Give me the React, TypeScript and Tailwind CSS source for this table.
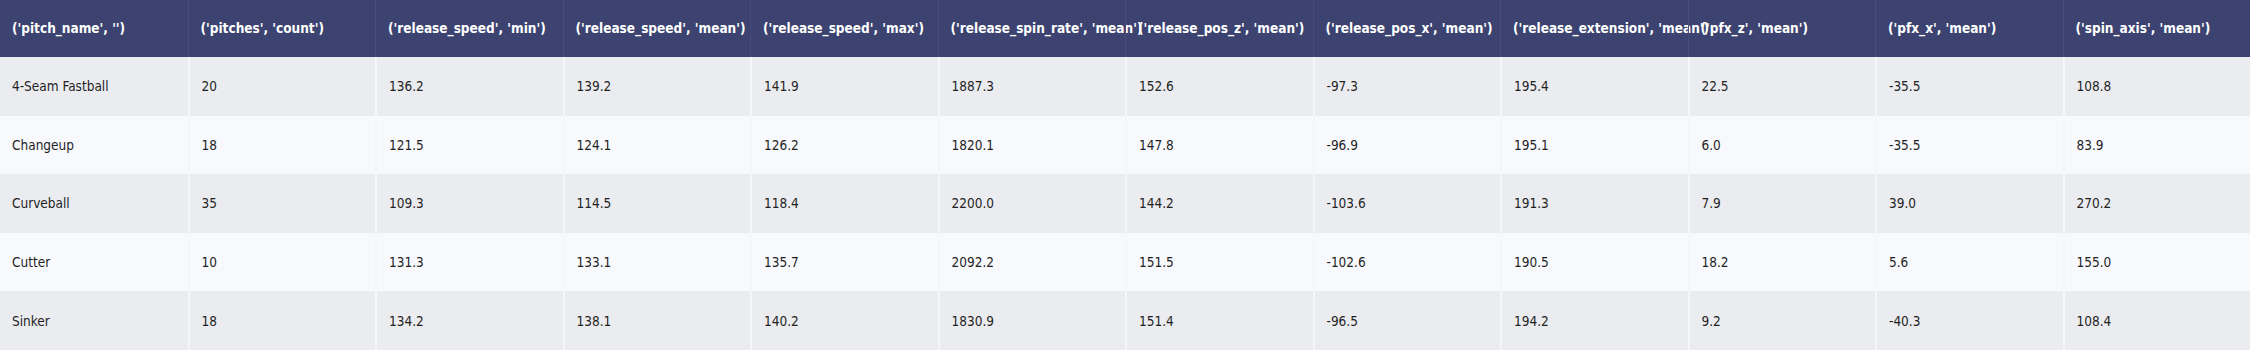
import React from "react";

const columns = [
  "('pitch_name', '')",
  "('pitches', 'count')",
  "('release_speed', 'min')",
  "('release_speed', 'mean')",
  "('release_speed', 'max')",
  "('release_spin_rate', 'mean')",
  "('release_pos_z', 'mean')",
  "('release_pos_x', 'mean')",
  "('release_extension', 'mean')",
  "('pfx_z', 'mean')",
  "('pfx_x', 'mean')",
  "('spin_axis', 'mean')",
];

const rows: string[][] = [
  ["4-Seam Fastball", "20", "136.2", "139.2", "141.9", "1887.3", "152.6", "-97.3", "195.4", "22.5", "-35.5", "108.8"],
  ["Changeup", "18", "121.5", "124.1", "126.2", "1820.1", "147.8", "-96.9", "195.1", "6.0", "-35.5", "83.9"],
  ["Curveball", "35", "109.3", "114.5", "118.4", "2200.0", "144.2", "-103.6", "191.3", "7.9", "39.0", "270.2"],
  ["Cutter", "10", "131.3", "133.1", "135.7", "2092.2", "151.5", "-102.6", "190.5", "18.2", "5.6", "155.0"],
  ["Sinker", "18", "134.2", "138.1", "140.2", "1830.9", "151.4", "-96.5", "194.2", "9.2", "-40.3", "108.4"],
];

const font = "font-['DejaVu_Sans_Condensed','DejaVu_Sans',sans-serif] font-stretch-condensed";

export default function App() {
  return (
    <div className={`w-[2250px] h-[350px] overflow-hidden bg-white ${font}`}>
      {/* header */}
      <div className="grid grid-cols-12 h-[57px] bg-[#3c4371]">
        {columns.map((c, i) => (
          <div
            key={c}
            className={`flex items-center px-3 whitespace-nowrap text-[13.5px] font-bold text-white ${
              i > 0 ? "border-l border-[#464d7a]" : ""
            }`}
          >
            {c}
          </div>
        ))}
      </div>

      {rows.map((r, ri) => (
        <div
          key={r[0]}
          className={`grid grid-cols-12 h-[58.6px] ${ri % 2 === 0 ? "bg-[#ebecef]" : "bg-[#f8f9fc]"}`}
        >
          {r.map((v, i) => (
            <div
              key={i}
              className={`flex items-center px-3 whitespace-nowrap text-[13.5px] text-[#1f1f1f] ${
                i > 0 ? "border-l-2 border-[#f5f6f8]" : ""
              }`}
            >
              {v}
            </div>
          ))}
        </div>
      ))}
    </div>
  );
}
